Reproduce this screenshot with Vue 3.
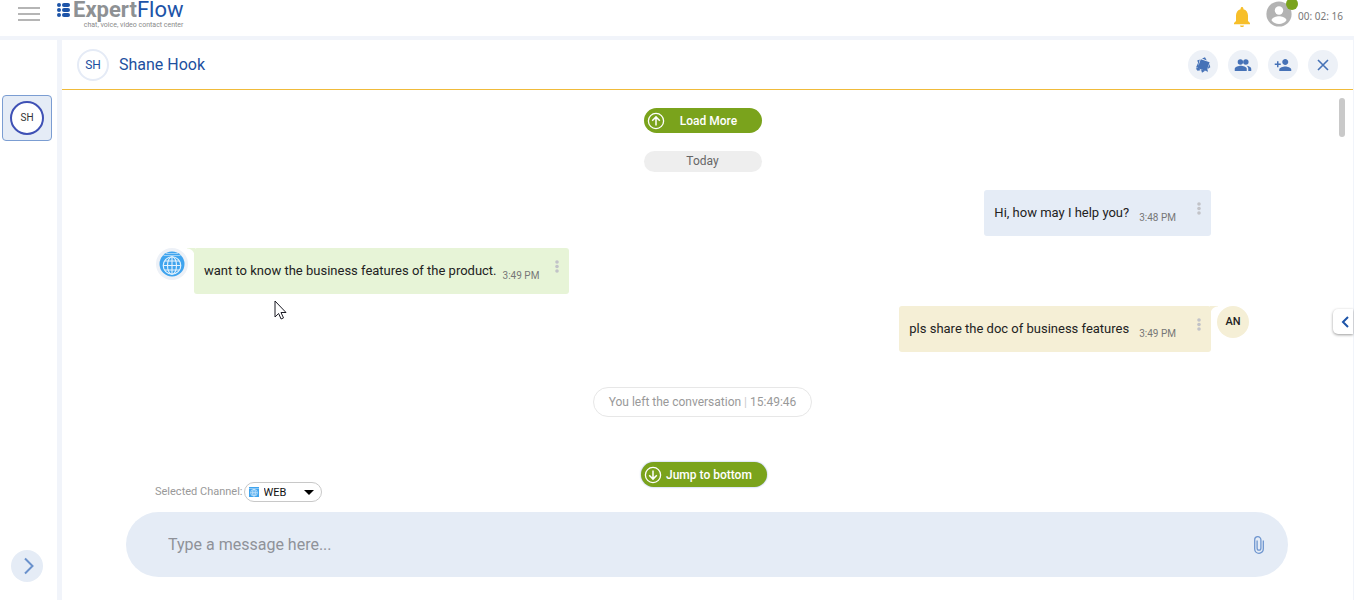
<script setup>
import { ref } from 'vue'

const draft = ref('')
const channel = ref('WEB')

const messages = [
  { id: 1, side: 'out', tone: 'blue', text: 'Hi, how may I help you?', time: '3:48 PM', avatar: '' },
  { id: 2, side: 'in', tone: 'mint', text: 'want to know the business features of the product.', time: '3:49 PM', avatar: 'web' },
  { id: 3, side: 'out', tone: 'sand', text: 'pls share the doc of business features', time: '3:49 PM', avatar: 'AN' }
]

const logoRows = [0, 1, 2]
</script>

<template>
  <div class="app">
    <header class="topbar">
      <button class="plain menu" aria-label="Menu"><span></span><span></span><span></span></button>
      <div class="logo">
        <div class="brand">
          <svg class="mark" width="14" height="16" viewBox="0 0 14 16" aria-hidden="true">
            <g v-for="r in logoRows" :key="r" fill="#1d54a8">
              <rect x="0" :y="r * 5 + 1" width="4" height="4" rx="2" />
              <rect x="5" :y="r * 5 + 1" width="8" height="4" rx="2" />
            </g>
          </svg>
          <span class="wordmark"><b>Expert</b>Flow</span>
        </div>
        <div class="tagline">chat, voice, video contact center</div>
      </div>
      <div class="status">
        <button class="plain bell" aria-label="Notifications">
          <svg width="16" height="20" viewBox="0 0 16 20"><path fill="#f7bf2a" d="M8 20c1.1 0 2-.7 2-1.600H6c0 .9.900 1.600 2 1.600zm6-6V8.500c0-3-1.700-5.600-4.600-6.300v-.7C9.400.6 8.800 0 8 0S6.600.6 6.600 1.500v.7C3.700 2.900 2 5.500 2 8.500V14l-2 2v1.200h16V16z" /></svg>
        </button>
        <button class="plain user" aria-label="Agent status">
          <svg width="26" height="26" viewBox="0 0 26 26"><circle cx="13" cy="13" r="12.600" fill="#b3b3b3" /><circle cx="13" cy="9.500" r="4.200" fill="#fff" /><path fill="#fff" d="M5.500 19.200c.3-2.600 5-4 7.500-4s7.200 1.400 7.500 4A9.600 9.600 0 0 1 13 23a9.600 9.600 0 0 1-7.500-3.800z" /></svg>
          <span class="dot"></span>
        </button>
        <span class="timer">00: 02: 16</span>
      </div>
    </header>

    <div class="body">
      <nav class="rail">
        <button class="tab" aria-label="Shane Hook conversation"><span>SH</span></button>
        <button class="plain expand" aria-label="Expand list">
          <svg width="32" height="32" viewBox="0 0 32 32"><path d="M14 8.500l7.500 7.500L14 23.500" fill="none" stroke="#6a91cc" stroke-width="2" /></svg>
        </button>
      </nav>

      <main class="panel">
        <div class="panel-head">
          <span class="initials">SH</span>
          <h1>Shane Hook</h1>
          <div class="actions">
            <button class="round" aria-label="Notes">
              <svg width="16" height="16" viewBox="0 0 16 16" fill="#4672b7"><path d="M5.800 2.200L14.600 5.200 11.600 14 2.400 11.200z" /><path d="M7 1.600l3-1.400 1.800 3.200zM2.200 3.600l2.600-1L3.600 7zM1 10.500L3.200 5.500l1 5zM.800 11.500l2.700-.8 2 2.600-3 .4zM6 12.500l4.500 1-3.500 2.300zM10.500 13l2.300-.5-.3 2.700zM12.600 12l1.800-5 .9 3.200z" /></svg>
            </button>
            <button class="round" aria-label="Participants">
              <svg width="18" height="18" viewBox="0 0 24 24" fill="#4672b7"><path d="M16.670 13.130C18.040 14.060 19 15.320 19 17v3h4v-3c0-2.180-3.570-3.470-6.330-3.870z" /><circle cx="8.500" cy="8" r="3.600" /><circle cx="15.800" cy="8" r="3.600" /><path d="M9 13c-2.670 0-8 1.340-8 4v3h16v-3c0-2.660-5.330-4-8-4z" /></svg>
            </button>
            <button class="round" aria-label="Add participant">
              <svg width="18" height="18" viewBox="0 0 24 24" fill="#4672b7"><path d="M15 12c2.210 0 4-1.790 4-4s-1.790-4-4-4-4 1.790-4 4 1.790 4 4 4zm-9-2V7H4v3H1v2h3v3h2v-3h3v-2H6zm9 4c-2.670 0-8 1.340-8 4v2h16v-2c0-2.660-5.330-4-8-4z" /></svg>
            </button>
            <button class="round" aria-label="Close">
              <svg width="12" height="12" viewBox="0 0 12 12"><path d="M1 1l10 10M11 1L1 11" stroke="#4672b7" stroke-width="1.600" /></svg>
            </button>
          </div>
        </div>

        <section class="feed">
          <button class="pill load">
            <svg width="18" height="18" viewBox="0 0 18 18" fill="none" stroke="#fff" stroke-width="1.300"><circle cx="9" cy="9" r="7.600" /><path d="M9 13.500V5M5.200 8.700L9 4.900l3.800 3.800" stroke-width="1.500" /></svg>
            <span>Load More</span>
          </button>
          <div class="day">Today</div>

          <div v-for="m in messages" :key="m.id" class="message" :class="[m.side, m.tone]">
            <span v-if="m.avatar === 'web'" class="avatar globe">
              <svg width="26" height="26" viewBox="0 0 26 26">
                <circle cx="13" cy="13" r="12.500" fill="#3fa4ee" />
                <path d="M7 2.500h12M4.500 4.500h17" stroke="#9bd0f7" />
                <g fill="none" stroke="#e5f3fd" stroke-width="1.100"><circle cx="13" cy="14.500" r="8.800" /><ellipse cx="13" cy="14.500" rx="4.500" ry="8.800" /><path d="M13 5.700v17.600M4.200 14.500h17.600M5.500 10h15M5.500 19h15" /></g>
              </svg>
            </span>
            <div class="bubble">
              <p>{{ m.text }}</p>
              <time>{{ m.time }}</time>
              <button class="plain more" aria-label="Message options">
                <svg width="4" height="13" viewBox="0 0 4 13" fill="#c2c3c8"><circle cx="2" cy="2" r="1.800" /><circle cx="2" cy="6.500" r="1.800" /><circle cx="2" cy="11" r="1.800" /></svg>
              </button>
            </div>
            <span v-if="m.side === 'out'" class="avatar" :class="{ named: m.avatar }">{{ m.avatar }}</span>
          </div>

          <div class="notice">You left the conversation <i>|</i> 15:49:46</div>
          <button class="pill jump">
            <svg width="18" height="18" viewBox="0 0 18 18" fill="none" stroke="#fff" stroke-width="1.300"><circle cx="9" cy="9" r="7.600" /><path d="M9 4.500V13M5.200 9.300L9 13.100l3.800-3.800" stroke-width="1.500" /></svg>
            <span>Jump to bottom</span>
          </button>
          <span class="scroll-thumb"></span>
        </section>

        <footer class="composer">
          <div class="channel">
            <label for="channel">Selected Channel:</label>
            <span class="select-wrap">
              <svg class="web" width="10" height="10" viewBox="0 0 10 10"><path fill="#3fa4ee" d="M0 0h10v10H0z" /><path d="M0 1.500h10" stroke="#8cc8f6" /><g fill="none" stroke="#d4ebfc" stroke-width=".7"><circle cx="5" cy="5.700" r="3.400" /><path d="M5 2.300v6.800M1.600 5.700h6.800" /><ellipse cx="5" cy="5.700" rx="1.600" ry="3.400" /></g></svg>
              <select id="channel" v-model="channel"><option>WEB</option></select>
              <svg class="caret" width="10" height="5" viewBox="0 0 10 5"><path d="M0 0h10L5 5z" /></svg>
            </span>
          </div>
          <div class="entry">
            <input v-model="draft" type="text" aria-label="Message" placeholder="Type a message here..." />
            <button class="plain clip" aria-label="Attach file">
              <svg width="10" height="18" viewBox="0 0 10 18" fill="none" stroke="#6f96cf" stroke-width="1.300"><path d="M9.300 4.500v8.500a4.300 4.300 0 0 1-8.600 0V3.800a3.100 3.100 0 0 1 6.200 0v8.500a1.900 1.900 0 0 1-3.800 0V4.500" /></svg>
            </button>
          </div>
        </footer>

        <button class="drawer" aria-label="Open side panel">
          <svg width="8" height="12" viewBox="0 0 8 12"><path d="M7 1L2 6l5 5" fill="none" stroke="#1d54a8" stroke-width="2" /></svg>
        </button>
      </main>
    </div>
    <svg class="cursor" width="13" height="20" viewBox="0 0 13 20" aria-hidden="true"><path d="M1 1v16l3.600-3.500 2.500 5.500 2.400-1.100L7 12.500h5z" fill="#fff" stroke="#1a1a24" stroke-width="1" /></svg>
  </div>
</template>

<style>
body {
  margin: 0;
}
</style>

<style scoped>
.app {
  display: flex;
  flex-direction: column;
  height: 100vh;
  position: relative;
  overflow: hidden;
  background: #f1f4fa;
  font-family: Roboto, "Liberation Sans", sans-serif;
  color: #222;
}
.app * {
  box-sizing: border-box;
}
button {
  font-family: inherit;
  cursor: pointer;
}
svg {
  display: block;
  flex: none;
}
.plain {
  border: 0;
  padding: 0;
  background: none;
}
.topbar {
  display: flex;
  height: 36px;
  flex: none;
  background: #fff;
  padding: 0 11px 0 18px;
}
.menu {
  display: flex;
  flex-direction: column;
  gap: 4px;
  width: 22px;
  height: 14px;
  margin-top: 7px;
}
.menu span {
  height: 2px;
  width: 22px;
  background: #b5b5b5;
}
.logo {
  margin-left: 17px;
}
.brand {
  display: flex;
  height: 20px;
  align-items: center;
  font-size: 22px;
  line-height: 20px;
  color: #1d54a8;
}
.mark {
  margin-right: 2px;
}
.wordmark b {
  font-weight: 700;
  color: #8e9194;
}
.tagline {
  font-size: 7px;
  line-height: 10px;
  text-align: right;
  color: #8a8a8a;
}
.status {
  display: flex;
  margin-left: auto;
}
.bell {
  height: 20px;
  margin-top: 7px;
}
.user {
  position: relative;
  height: 26px;
  margin: 1px 6px 0 16px;
}
.dot {
  position: absolute;
  top: -3px;
  right: -6px;
  width: 12px;
  height: 12px;
  border-radius: 50%;
  background: #7aa31c;
}
.timer {
  margin-top: 9px;
  font-family: "Noto Sans", sans-serif;
  font-size: 10px;
  line-height: 14px;
  color: #777;
}
.body {
  display: flex;
  flex: 1;
  min-height: 0;
  margin-top: 4px;
  gap: 5px;
  padding-right: 1px;
}
.rail {
  display: flex;
  flex-direction: column;
  justify-content: space-between;
  width: 57px;
  flex: none;
  background: #fff;
  padding: 55px 2px 18px;
}
.tab {
  display: flex;
  align-items: center;
  justify-content: center;
  width: 50px;
  height: 46px;
  padding: 0;
  border: 1px solid #7b9dd2;
  border-radius: 4px;
  background: #e5ecf6;
}
.tab span {
  width: 34px;
  height: 34px;
  border: 2px solid #3f51b5;
  border-radius: 50%;
  background: #fff;
  font-size: 10px;
  line-height: 30px;
  color: #333;
}
.expand {
  width: 32px;
  height: 32px;
  margin-left: 9px;
  border-radius: 50%;
  background: #e5ecf6;
}
.panel {
  position: relative;
  display: flex;
  flex-direction: column;
  flex: 1;
  min-width: 0;
  background: #fff;
}
.panel-head {
  display: flex;
  align-items: center;
  height: 50px;
  flex: none;
  padding: 0 15px;
  border-bottom: 1px solid #f0bb3a;
}
.initials {
  width: 32px;
  height: 32px;
  border: 2px solid #e5ebf6;
  border-radius: 50%;
  font-size: 12px;
  line-height: 28px;
  text-align: center;
  color: #1d4fa0;
}
h1 {
  margin: 0 0 0 10px;
  font-size: 16px;
  line-height: 20px;
  font-weight: 400;
  color: #1d4fa0;
}
.actions {
  display: flex;
  gap: 10px;
  margin-left: auto;
}
.round {
  display: flex;
  align-items: center;
  justify-content: center;
  width: 30px;
  height: 30px;
  padding: 0;
  border: 0;
  border-radius: 50%;
  background: #edf1f7;
}
.feed {
  position: relative;
  display: flex;
  flex-direction: column;
  align-items: center;
  flex: 1;
  min-height: 0;
  padding: 18px 104px 0 94px;
}
.pill {
  display: flex;
  align-items: center;
  flex: none;
  height: 25px;
  padding: 0 3px;
  border: 0;
  border-radius: 13px;
  background: #7aa31c;
  font-size: 12px;
  font-weight: 500;
  color: #fff;
}
.load {
  width: 118px;
}
.load span {
  flex: 1;
  padding-right: 6px;
}
.day {
  width: 118px;
  margin: 18px 0;
  border-radius: 11px;
  background: #eee;
  font-size: 12px;
  line-height: 21px;
  text-align: center;
  color: #666;
}
.message {
  display: flex;
  width: 100%;
  gap: 6px;
  margin-bottom: 12px;
}
.out {
  justify-content: flex-end;
}
.bubble {
  position: relative;
  display: flex;
  height: 46px;
  padding: 0 10px;
  border-radius: 3px;
}
.bubble p {
  margin: 0;
  font-size: 13px;
  line-height: 45px;
}
.bubble time {
  margin-left: 10px;
  font-size: 10px;
  line-height: 55px;
  color: #777;
}
.in .bubble time {
  margin-left: 6px;
}
.more {
  width: 4px;
  height: 13px;
  margin: 12px 0 0 21px;
}
.in .more {
  margin-left: 16px;
}
.blue .bubble {
  background: #e5ecf6;
}
.mint .bubble {
  background: #e7f4d7;
}
.sand .bubble {
  background: #f5efd6;
}
.mint .bubble::before,
.sand .bubble::after {
  content: "";
  position: absolute;
  top: 0;
  width: 8px;
  height: 8px;
}
.mint .bubble::before {
  right: 100%;
  margin-right: -1px;
  background: radial-gradient(circle at 0 100%, transparent 7px, #e7f4d7 8px);
}
.sand .bubble::after {
  left: 100%;
  margin-left: -1px;
  background: radial-gradient(circle at 100% 100%, transparent 7px, #f5efd6 8px);
}
.avatar {
  width: 32px;
  height: 32px;
  flex: none;
  border-radius: 50%;
  font-size: 11px;
  font-weight: 500;
  line-height: 32px;
  text-align: center;
}
.named {
  background: #f5efd6;
}
.globe {
  padding: 3px;
  background: #edf1f7;
}
.notice {
  margin-top: 23px;
  padding: 0 15px;
  border: 1px solid #e7e7e7;
  border-radius: 15px;
  font-size: 12px;
  line-height: 28px;
  color: #999;
}
.notice i {
  font-style: normal;
  color: #ccc;
}
.jump {
  width: 126px;
  margin: 45px 0 0 3px;
  gap: 4px;
  box-shadow: 0 0 2px #8fa8e0;
}
.scroll-thumb {
  position: absolute;
  top: 8px;
  right: 8px;
  width: 6px;
  height: 39px;
  border-radius: 3px;
  background: #c9c9c9;
}
.composer {
  flex: none;
  padding: 0 65px 23px 64px;
}
.channel {
  display: flex;
  align-items: center;
  gap: 1px;
  margin: 0 0 10px 29px;
  font-size: 11px;
  line-height: 20px;
  color: #999;
}
.select-wrap {
  position: relative;
}
select {
  display: block;
  appearance: none;
  width: 78px;
  height: 20px;
  padding: 0 20px 0 19px;
  border: 1px solid #c8c8c8;
  border-radius: 10px;
  background: #fff;
  font-family: inherit;
  font-size: 11px;
  color: #111;
}
.web {
  position: absolute;
  left: 5px;
  top: 5px;
  pointer-events: none;
}
.caret {
  position: absolute;
  right: 8px;
  top: 8px;
  pointer-events: none;
}
.entry {
  display: flex;
  align-items: center;
  height: 65px;
  padding: 0 24px 0 42px;
  border-radius: 33px;
  background: #e5ecf6;
}
input {
  flex: 1;
  min-width: 0;
  border: 0;
  padding: 0;
  outline: 0;
  background: none;
  font-family: inherit;
  font-size: 16px;
  line-height: 20px;
  color: #333;
}
input::placeholder {
  color: #8f9299;
  opacity: 1;
}
.drawer {
  position: absolute;
  top: 269px;
  right: 0;
  display: flex;
  align-items: center;
  width: 20px;
  height: 25px;
  padding: 0 0 0 8px;
  border: 0;
  border-radius: 5px 0 0 5px;
  background: #fff;
  box-shadow: 0 1px 3px rgba(0, 0, 0, 0.4);
}
.cursor {
  position: absolute;
  left: 274px;
  top: 300px;
}
</style>
